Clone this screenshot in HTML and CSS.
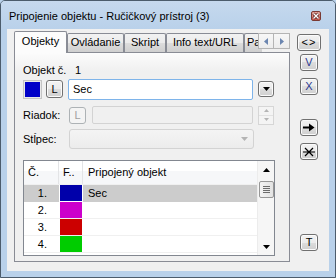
FILE: index.html
```html
<!DOCTYPE html>
<html lang="sk">
<head>
  <meta charset="UTF-8" />
  <title>Pripojenie objektu</title>
  <link rel="stylesheet" href="styles.css">
</head>
<body>
  <div class="window">
    <div class="titlebar">
      <span class="title">Pripojenie objektu - Ručičkový prístroj (3)</span>
      <span class="close">
        <svg width="8" height="8" viewBox="0 0 8 8"><path d="M1.5 1.5 L6.5 6.5 M6.5 1.5 L1.5 6.5" stroke="#5a1f1a" stroke-width="3"/><path d="M1.5 1.5 L6.5 6.5 M6.5 1.5 L1.5 6.5" stroke="#fff" stroke-width="1.4"/></svg>
      </span>
    </div>

    <div class="client">
      <div class="tabs">
        <div class="tabstrip">
          <div class="tab active w1">Objekty</div>
          <div class="tab w2">Ovládanie</div>
          <div class="tab w3">Skript</div>
          <div class="tab w4">Info text/URL</div>
          <div class="tab cut">Pa</div>
          <div class="scroller">
            <span class="sbtn"><svg width="5" height="7" viewBox="0 0 5 7"><path d="M4 0 L0 3.5 L4 7Z" fill="#6b86b0"/></svg></span>
            <span class="sbtn"><svg width="5" height="7" viewBox="0 0 5 7"><path d="M1 0 L5 3.5 L1 7Z" fill="#6b86b0"/></svg></span>
          </div>
        </div>

        <div class="panel">
          <div class="row1">
            <span class="lbl-obj">Objekt č.</span>
            <span>1</span>
          </div>

          <div class="row2">
            <span class="swatch"></span>
            <span class="btn small">L</span>
            <span class="input focus">Sec</span>
            <span class="btn drop">
              <svg width="7" height="4" viewBox="0 0 7 4"><path d="M0 0 H7 L3.5 4Z" fill="#000"/></svg>
            </span>
          </div>

          <div class="row3">
            <span class="lbl">Riadok:</span>
            <span class="btn small disabled">L</span>
            <span class="input off"></span>
            <span class="spin">
              <span class="half"><svg width="5" height="3" viewBox="0 0 5 3"><path d="M0 3 H5 L2.5 0Z" fill="#b4b4b4"/></svg></span>
              <span class="half"><svg width="5" height="3" viewBox="0 0 5 3"><path d="M0 0 H5 L2.5 3Z" fill="#b4b4b4"/></svg></span>
            </span>
          </div>

          <div class="row4">
            <span class="lbl">Stĺpec:</span>
            <span class="combo">
              <svg width="7" height="4" viewBox="0 0 7 4"><path d="M0 0 H7 L3.5 4Z" fill="#b4b4b4"/></svg>
            </span>
          </div>

          <div class="list">
            <div class="grid">
              <div class="lhead">
                <span class="hc">Č.</span>
                <span class="hc">F..</span>
                <span class="hc last">Pripojený objekt</span>
              </div>
              <div class="lrow sel">
                <span class="num">1.</span>
                <span class="cell"><span class="sw blue"></span></span>
                <span class="name">Sec</span>
              </div>
              <div class="lrow">
                <span class="num">2.</span>
                <span class="cell"><span class="sw magenta"></span></span>
                <span class="name"></span>
              </div>
              <div class="lrow">
                <span class="num">3.</span>
                <span class="cell"><span class="sw red"></span></span>
                <span class="name"></span>
              </div>
              <div class="lrow">
                <span class="num">4.</span>
                <span class="cell"><span class="sw green"></span></span>
                <span class="name"></span>
              </div>
            </div>
            <div class="vscroll">
              <span class="arrow"><svg width="7" height="4" viewBox="0 0 7 4"><path d="M0 4 H7 L3.5 0Z" fill="#000"/></svg></span>
              <span class="thumb"><i></i><i></i><i></i><i></i></span>
              <span class="track"></span>
              <span class="arrow"><svg width="7" height="4" viewBox="0 0 7 4"><path d="M0 0 H7 L3.5 4Z" fill="#000"/></svg></span>
            </div>
          </div>
        </div>
      </div>

      <div class="side">
        <span class="btn wide">&lt;&gt;</span>
        <span class="btn side-v blue-txt">V</span>
        <span class="btn side-x blue-txt">X</span>
        <span class="btn side-arrow">
          <svg width="12" height="9" viewBox="0 0 12 9"><path d="M0 4.5 H7" stroke="#000" stroke-width="2"/><path d="M6 0.5 L11.5 4.5 L6 8.5Z" fill="#000"/></svg>
        </span>
        <span class="btn side-cross">
          <svg width="12" height="10" viewBox="0 0 12 10"><path d="M0 5 H12 M2 1 L10 9 M10 1 L2 9" stroke="#000" stroke-width="1.2"/></svg>
        </span>
        <span class="btn side-t">T</span>
      </div>
    </div>
  </div>
</body>
</html>
```

FILE: styles.css
```css
* { box-sizing: border-box; }
body { margin: 0; font-family: "Liberation Sans", Arial, sans-serif; font-size: 11px; color: #000; background: #b9d1ea; }

.window { width: 336px; height: 278px; border: 1px solid #4c5c6c; border-radius: 5px 5px 0 0; background: #b9d1ea; display: flex; flex-direction: column; }
.titlebar { height: 28px; flex: none; display: flex; justify-content: space-between; align-items: flex-start; padding: 0 14px 0 8px; background: linear-gradient(#c6d9ee, #b9d1ea); border-radius: 4px 4px 0 0; }
.title { margin-top: 9px; line-height: 13px; }
.close { margin-top: 10px; width: 10px; height: 10px; border: 1px solid #7a3a33; border-radius: 2px; background: linear-gradient(#e9a89e, #c8564b); display: flex; align-items: center; justify-content: center; }

.client { flex: 1; margin: 0 6px 6px 6px; background: #f0f0f0; display: flex; padding: 2px 0 0 7px; }

.tabs { width: 276px; }
.tabstrip { height: 21px; display: flex; align-items: flex-end; }
.tab { height: 19px; border: 1px solid #898c95; border-bottom: none; border-radius: 2px 2px 0 0; background: linear-gradient(#f2f2f2, #ebebeb 50%, #dddddd 50%, #cfcfcf); text-align: center; line-height: 17px; white-space: nowrap; }
.tab.active { height: 22px; margin-bottom: -1px; position: relative; z-index: 1; background: #fcfcfc; line-height: 19px; }
.w1 { width: 53px; }
.w2 { width: 57px; }
.w3 { width: 42px; }
.w4 { width: 78px; }
.tab.cut { width: 18px; text-align: left; padding-left: 2px; border-right: none; }
.scroller { width: 32px; height: 16px; align-self: flex-start; margin-top: 2px; margin-left: -4px; position: relative; z-index: 2; display: flex; }
.sbtn { width: 16px; height: 16px; border: 1px solid #b4b4b4; background: linear-gradient(#f7f7f7, #ececec); display: flex; align-items: center; justify-content: center; }
.sbtn + .sbtn { border-left: none; }

.panel { height: 210px; border: 1px solid #898c95; background: linear-gradient(#fcfcfc, #f0f0f0 18px); padding: 11px 14px 0 8px; }

.row1 { display: flex; line-height: 13px; }
.lbl-obj { width: 52px; }

.row2 { display: flex; align-items: center; height: 22px; margin-top: 1px; }
.swatch { width: 19px; height: 19px; border: 1px solid #c4c4c4; background: #0000c8; box-shadow: inset 0 0 0 1px #e8e8e8; }
.btn { display: flex; align-items: center; justify-content: center; border: 1px solid #707070; border-radius: 3px; background: linear-gradient(#f2f2f2, #ebebeb 50%, #dddddd 50%, #cfcfcf); box-shadow: inset 0 0 0 1px #fbfbfb; line-height: 1; }
.btn.small { width: 17px; height: 18px; margin-left: 4px; }
.input { height: 21px; flex: 1; margin-left: 5px; border: 1px solid #abadb3; border-radius: 2px; background: #fff; padding-left: 4px; display: flex; align-items: center; }
.input.focus { border-color: #7eb4ea; }
.btn.drop { width: 16px; height: 16px; margin-left: 5px; margin-right: 1px; }

.row3 { display: flex; align-items: center; height: 20px; margin-top: 5px; }
.lbl { width: 46px; }
.row3 .btn.small { margin-left: 0; height: 17px; }
.btn.disabled { border-color: #adb2b5; background: #f4f4f4; color: #a0a0a0; box-shadow: none; }
.input.off { height: 18px; margin-left: 6px; border-color: #d3d3d3; background: #f0f0f0; }
.spin { width: 16px; height: 19px; margin-left: 5px; margin-right: 1px; display: flex; flex-direction: column; border: 1px solid #d6d6d6; background: #f4f4f4; }
.half { flex: 1; display: flex; align-items: center; justify-content: center; }
.half + .half { border-top: 1px solid #e2e2e2; }

.row4 { display: flex; align-items: center; height: 20px; margin-top: 4px; }
.combo { width: 185px; height: 20px; border: 1px solid #d3d3d3; border-radius: 3px; background: linear-gradient(#f4f4f4, #ececec); display: flex; align-items: center; justify-content: flex-end; padding-right: 5px; }

.list { margin-top: 11px; height: 96px; border: 1px solid #828790; background: #fff; display: flex; }
.grid { flex: 1; overflow: hidden; }
.lhead { height: 24px; display: grid; grid-template-columns: 35px 24px 1fr; background: linear-gradient(#fff 45%, #f6f7f9 45%); border-bottom: 1px solid #f0f0f0; }
.hc { line-height: 22px; padding-left: 4px; border-right: 1px solid #e3e4e6; white-space: nowrap; }
.hc.last { border-right: none; padding-left: 5px; }
.lrow { display: grid; grid-template-columns: 35px 24px 1fr; height: 17px; border-bottom: 1px solid #f0f0f0; line-height: 17px; }
.num { text-align: right; padding-right: 12px; }
.cell { padding-left: 1px; padding-right: 1px; }
.sw { display: block; height: 16px; }
.name { padding-left: 5px; }
.sel .num, .sel .name { background: #cccccc; }
.sel { border-bottom-color: #fff; }
.blue { background: #0000aa; }
.magenta { background: #cc00cc; }
.red { background: #cc0000; }
.green { background: #00cc00; }

.vscroll { width: 17px; display: flex; flex-direction: column; align-items: center; background: #f6f6f6; border-left: 1px solid #ececec; }
.arrow { height: 17px; width: 100%; display: flex; align-items: center; justify-content: center; }
.thumb { margin-top: 3px; width: 15px; height: 17px; border: 1px solid #979797; border-radius: 2px; background: linear-gradient(90deg, #f3f3f3, #e3e3e3); display: flex; flex-direction: column; align-items: center; justify-content: center; gap: 1px; }
.thumb i { display: block; width: 7px; height: 1px; background: #6c6c6c; }
.track { flex: 1; }

.side { width: 24px; margin-left: 7px; display: flex; flex-direction: column; align-items: center; padding-top: 3px; }
.btn.wide { width: 24px; height: 17px; letter-spacing: 1px; }
.side .btn { font-size: 11px; }
.side-v, .side-x, .side-arrow, .side-cross, .side-t { width: 18px; height: 17px; }
.side-v { margin-top: 3px; }
.side-x { margin-top: 7px; }
.side-arrow { margin-top: 24px; }
.side-cross { margin-top: 7px; }
.side-t { margin-top: 74px; }
.blue-txt { color: #2b3990; }
```
